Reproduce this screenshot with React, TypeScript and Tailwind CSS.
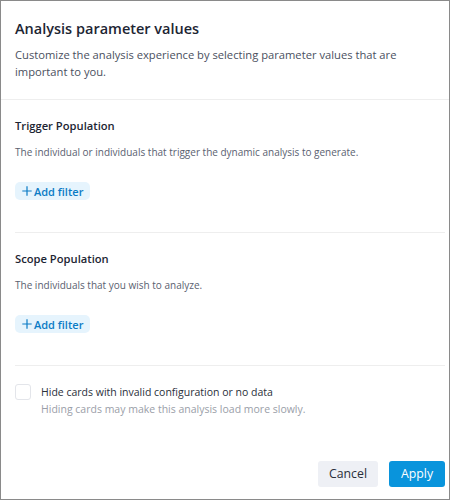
import React from "react";

function AddFilter() {
  return (
    <button className="flex items-center rounded-[5px] bg-[#e6f4fd] pl-[7px] pr-[7px] h-[18px] text-[11px] font-semibold text-[#0b7bc5] leading-none">
      <svg width="10" height="10" viewBox="0 0 10 10" className="mr-[2px]">
        <path d="M5 0.3v9.4M0.3 5h9.4" stroke="#0b7bc5" strokeWidth="1.2" />
      </svg>
      Add filter
    </button>
  );
}

export default function App() {
  return (
    <div
      className="w-[450px] h-[500px] border border-[#8a8a8a] bg-white flex flex-col"
      style={{ fontFamily: '"Open Sans", sans-serif' }}
    >
      <div className="pl-[14px] pr-[10px] pt-[18px] pb-[19px] border-b border-[#eeeeee]">
        <h1 className="text-[14.5px] font-semibold text-[#1d2533] leading-[20px]">Analysis parameter values</h1>
        <p className="mt-[7px] text-[11.2px] text-[#4a5060] leading-[17px]">
          Customize the analysis experience by selecting parameter values that are important to you.
        </p>
      </div>
      <div className="pl-[14px] pr-[4px] flex-1 flex flex-col">
        <div className="pt-[18px] pb-[32px] border-b border-[#eeeeee]">
          <h2 className="text-[11.2px] font-semibold text-[#1d2533] leading-[16px]">Trigger Population</h2>
          <p className="mt-[11px] text-[10px] text-[#5a6170] leading-[14px]">
            The individual or individuals that trigger the dynamic analysis to generate.
          </p>
          <div className="mt-[23px]">
            <AddFilter />
          </div>
        </div>
        <div className="pt-[18px] pb-[32px] border-b border-[#eeeeee]">
          <h2 className="text-[11.2px] font-semibold text-[#1d2533] leading-[16px]">Scope Population</h2>
          <p className="mt-[11px] text-[10px] text-[#5a6170] leading-[14px]">
            The individuals that you wish to analyze.
          </p>
          <div className="mt-[23px]">
            <AddFilter />
          </div>
        </div>
        <div className="pt-[18px] flex gap-[10px]">
          <div className="w-[16px] h-[16px] rounded-[3px] border border-[#e3e5ea] bg-white shrink-0" />
          <div>
            <div className="text-[10.5px] text-[#2a2f3a] leading-[16px]">Hide cards with invalid configuration or no data</div>
            <div className="mt-[1px] text-[10.5px] text-[#9a9ea8] leading-[16px]">Hiding cards may make this analysis load more slowly.</div>
          </div>
        </div>
        <div className="mt-auto pb-[12px] flex justify-end gap-[11px]">
          <button className="h-[26px] w-[60px] rounded-[3px] bg-[#eef0f5] text-[12.3px] text-[#2a2f3a]">Cancel</button>
          <button className="h-[26px] w-[56px] rounded-[3px] bg-[#0994dc] text-[12.3px] text-white">Apply</button>
        </div>
      </div>
    </div>
  );
}
